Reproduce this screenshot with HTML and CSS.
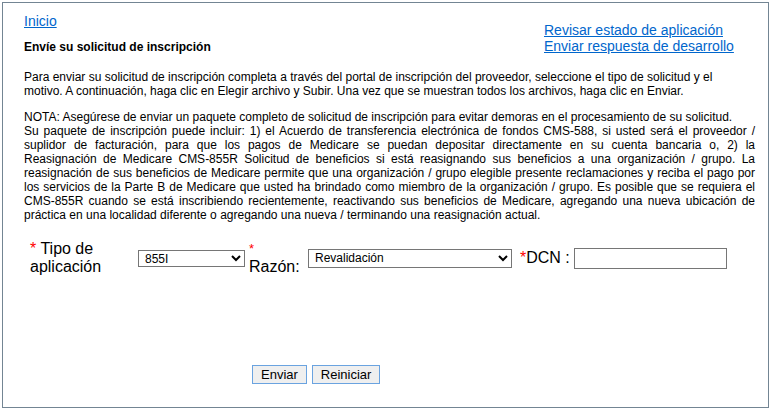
FILE: index.html
```html
<!DOCTYPE html>
<html>
<head>
    <title>Envíe su solicitud de inscripción</title>
    <link rel="stylesheet" href="styles.css">
</head>
<body>
    <div class="panel">
        <div class="top">
            <div class="top-left">
                <a href="#" class="home">Inicio</a>
                <h1>Envíe su solicitud de inscripción</h1>
            </div>
            <div class="top-links">
                <a href="#">Revisar estado de aplicación</a>
                <a href="#">Enviar respuesta de desarrollo</a>
            </div>
        </div>

        <p class="intro">Para enviar su solicitud de inscripción completa a través del portal de inscripción del proveedor, seleccione el tipo de solicitud y el motivo. A continuación, haga clic en Elegir archivo y Subir. Una vez que se muestran todos los archivos, haga clic en Enviar.</p>

        <p class="note">
            <span class="line">NOTA: Asegúrese de enviar un paquete completo de solicitud de inscripción para evitar demoras en el procesamiento de su solicitud.</span>
            <span class="line fill">Su paquete de inscripción puede incluir: 1) el Acuerdo de transferencia electrónica de fondos CMS-588, si usted será el proveedor /</span>
            <span class="line fill">suplidor de facturación, para que los pagos de Medicare se puedan depositar directamente en su cuenta bancaria o, 2) la</span>
            <span class="line fill">Reasignación de Medicare CMS-855R Solicitud de beneficios si está reasignando sus beneficios a una organización / grupo. La</span>
            <span class="line fill">reasignación de sus beneficios de Medicare permite que una organización / grupo elegible presente reclamaciones y reciba el pago por</span>
            <span class="line fill">los servicios de la Parte B de Medicare que usted ha brindado como miembro de la organización / grupo. Es posible que se requiera el</span>
            <span class="line fill">CMS-855R cuando se está inscribiendo recientemente, reactivando sus beneficios de Medicare, agregando una nueva ubicación de</span>
            <span class="line">práctica en una localidad diferente o agregando una nueva / terminando una reasignación actual.</span>
        </p>

        <div class="form-row">
            <label class="lbl lbl-type" for="type"><span class="req">*</span> Tipo de aplicación</label>
            <select id="type" class="sel sel-type">
                <option>855I</option>
                <option>855B</option>
                <option>855A</option>
            </select>
            <label class="lbl lbl-reason" for="reason"><span class="req req-top">*</span><span>Razón:</span></label>
            <select id="reason" class="sel sel-reason">
                <option>Revalidación</option>
                <option>Inscripción inicial</option>
            </select>
            <label class="lbl lbl-dcn" for="dcn"><span class="req">*</span>DCN :</label>
            <input type="text" id="dcn" class="dcn">
        </div>

        <div class="actions">
            <button class="btn">Enviar</button>
            <button class="btn">Reiniciar</button>
        </div>
    </div>
</body>
</html>
```

FILE: styles.css
```css
body {
    margin: 0;
    background-color: white;
    color: black;
    font-family: "Liberation Sans", Arial, sans-serif;
    font-size: 12px;
}
a {
    color: #0066cc;
}
.panel {
    box-sizing: border-box;
    margin: 2px;
    width: 767px;
    height: 406px;
    border: 1px solid #738593;
    padding: 10px 0 0 21px;
}
.top {
    display: flex;
    align-items: flex-end;
    justify-content: space-between;
    width: 711px;
}
.top-left {
    display: flex;
    flex-direction: column;
}
.home {
    font-size: 14px;
    line-height: 16px;
}
h1 {
    font-size: 12px;
    line-height: 14px;
    margin: 11px 0 0 0;
}
.top-links {
    display: flex;
    flex-direction: column;
    font-size: 14px;
    line-height: 16px;
    width: 191px;
}
p {
    margin: 16px 0 0 0;
    width: 731px;
}
p.intro {
    width: 720px;
}
p.note {
    margin-top: 12px;
}
.line {
    display: block;
    white-space: nowrap;
}
.line.fill {
    text-align: justify;
    text-align-last: justify;
}
.form-row {
    display: flex;
    align-items: center;
    margin: 18px 0 0 6px;
}
.lbl {
    font-size: 16px;
    line-height: 18px;
}
.req {
    color: red;
}
.lbl-type {
    width: 108px;
}
.lbl-reason {
    display: flex;
    flex-direction: column;
    margin-left: 4px;
    width: 59px;
}
.req-top {
    font-size: 13px;
    line-height: 18px;
}
.lbl-dcn {
    margin: 0 4px 0 8px;
}
.sel {
    font-family: "Liberation Sans", Arial, sans-serif;
    font-size: 12px;
    border: 1px solid #767676;
    border-radius: 0;
    background-color: white;
    padding: 0 2px;
}
.sel-type {
    width: 107px;
    height: 17px;
}
.sel-reason {
    width: 204px;
    height: 19px;
}
.dcn {
    width: 149px;
    height: 17px;
    padding: 1px;
    border: 1px solid #767676;
    font-size: 12px;
}
.actions {
    margin: 89px 0 0 228px;
    display: flex;
    gap: 5px;
}
.btn {
    font-family: "Liberation Sans", Arial, sans-serif;
    font-size: 13px;
    height: 19px;
    padding: 0 8px;
    background-color: #efefef;
    border: 1px solid #6aa3e0;
    border-radius: 0;
    color: black;
}
```
